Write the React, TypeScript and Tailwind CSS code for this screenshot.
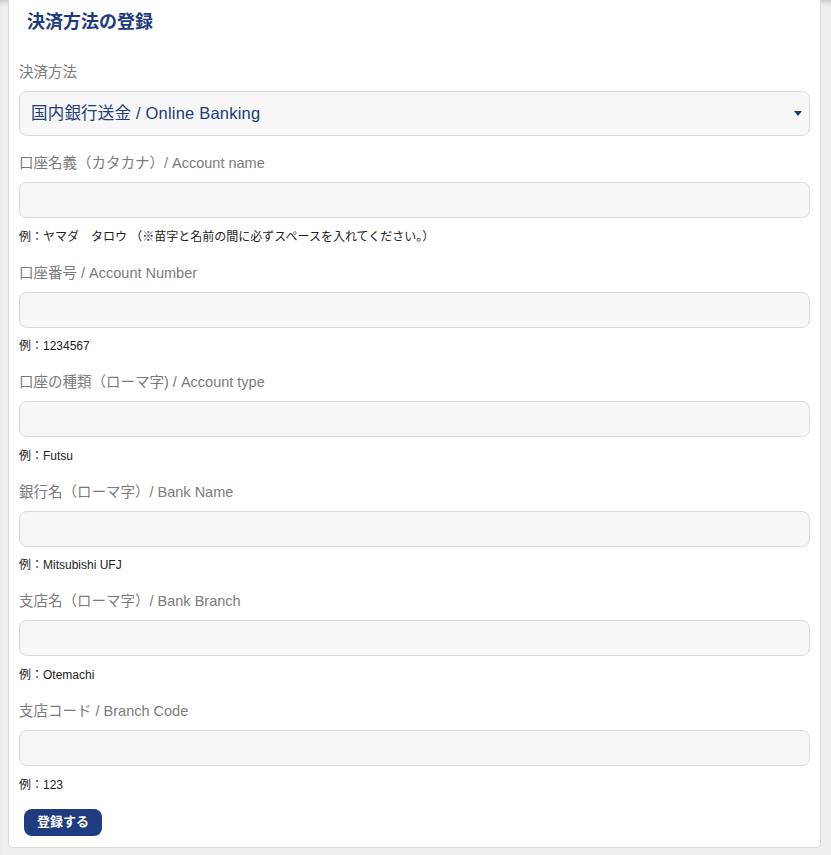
import React from 'react';

interface FieldProps {
  label: string;
  hint: string;
}

const fieldList: FieldProps[] = [
  { label: '口座名義（カタカナ）/ Account name', hint: '例：ヤマダ　タロウ （※苗字と名前の間に必ずスペースを入れてください。）' },
  { label: '口座番号 / Account Number', hint: '例：1234567' },
  { label: '口座の種類（ローマ字) / Account type', hint: '例：Futsu' },
  { label: '銀行名（ローマ字）/ Bank Name', hint: '例：Mitsubishi UFJ' },
  { label: '支店名（ローマ字）/ Bank Branch', hint: '例：Otemachi' },
  { label: '支店コード / Branch Code', hint: '例：123' },
];

function Field({ label, hint }: FieldProps) {
  return (
    <div className="mt-[17px]">
      <label className="block text-[14.5px] leading-[20px] text-[#7b7b7b]">{label}</label>
      <input
        type="text"
        className="mt-[9px] block h-[36px] w-full rounded-lg border border-[#dadada] bg-[#f7f7f7] px-3 outline-none"
      />
      <p className="mt-[9.6px] text-[12px] leading-[18px] text-[#222]">{hint}</p>
    </div>
  );
}

export default function App() {
  return (
    <div
      className="min-h-[855px] bg-[#efefef] pl-2 pr-[10px] pb-2 shadow-[inset_0_5px_5px_-3px_rgba(0,0,0,0.18)]"
      style={{ fontFamily: '"Liberation Sans", "Noto Sans CJK JP", sans-serif' }}
    >
      <div className="rounded-b-[5px] border-x border-b border-[#d9d9d9] bg-white px-[10px] pb-[11px] pt-[9px]">
        <h2 className="ml-2 text-[18px] font-bold leading-[26px] text-[#1b3b7e]">決済方法の登録</h2>

        <div className="mt-[27px]">
          <label className="block text-[14.5px] leading-[20px] text-[#7b7b7b]">決済方法</label>
          <div className="mt-[9px] flex h-[45px] items-center justify-between rounded-lg border border-[#dadada] bg-[#f7f7f7] pl-[11px] pr-[6px]">
            <span className="text-[16.5px] tracking-[0.2px] text-[#203c7c]">国内銀行送金 / Online Banking</span>
            <svg width="8" height="5" viewBox="0 0 8 5" className="mr-[1px]">
              <path d="M0 0 L8 0 L4 5 Z" fill="#203c7c" />
            </svg>
          </div>
        </div>

        {fieldList.map((f, i) => (
          <Field key={i} label={f.label} hint={f.hint} />
        ))}

        <button className="ml-[5px] mt-[15px] h-[27px] w-[78px] rounded-lg bg-[#1f3c80] text-[13px] font-bold text-white">
          登録する
        </button>
      </div>
    </div>
  );
}
